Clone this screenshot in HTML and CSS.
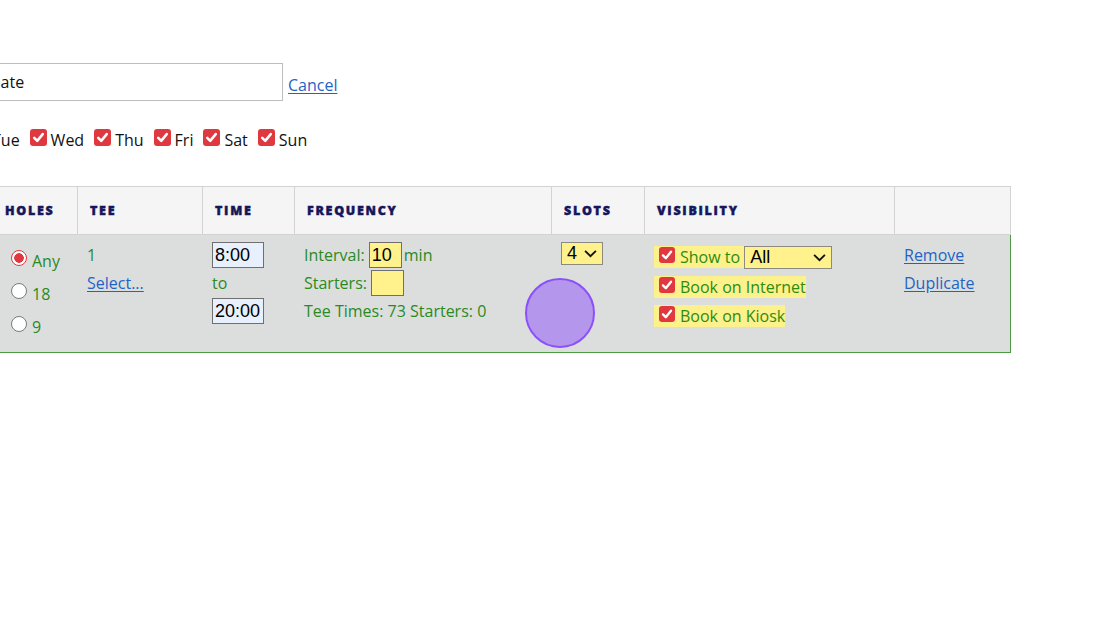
FILE: index.html
```html
<!DOCTYPE html>
<html>
<head>
<meta charset="utf-8">
<link rel="stylesheet" href="styles.css">
</head>
<body>
<div class="viewport">
  <div class="page">
    <div class="name-row">
      <input class="name-input" type="text" value="Date">
      <a class="link cancel" href="#">Cancel</a>
    </div>

    <div class="days-row">
      <label class="day"><span class="cb"><svg viewBox="0 0 16 16"><path d="M4 8.4l2.8 2.8L12 4.8"/></svg></span>Tue</label>
      <label class="day"><span class="cb"><svg viewBox="0 0 16 16"><path d="M4 8.4l2.8 2.8L12 4.8"/></svg></span>Wed</label>
      <label class="day"><span class="cb"><svg viewBox="0 0 16 16"><path d="M4 8.4l2.8 2.8L12 4.8"/></svg></span>Thu</label>
      <label class="day"><span class="cb"><svg viewBox="0 0 16 16"><path d="M4 8.4l2.8 2.8L12 4.8"/></svg></span>Fri</label>
      <label class="day"><span class="cb"><svg viewBox="0 0 16 16"><path d="M4 8.4l2.8 2.8L12 4.8"/></svg></span>Sat</label>
      <label class="day"><span class="cb"><svg viewBox="0 0 16 16"><path d="M4 8.4l2.8 2.8L12 4.8"/></svg></span>Sun</label>
    </div>

    <table class="grid">
      <colgroup>
        <col class="c-holes"><col class="c-tee"><col class="c-time"><col class="c-freq"><col class="c-slots"><col class="c-vis"><col class="c-act">
      </colgroup>
      <thead>
        <tr>
          <th>HOLES</th>
          <th>TEE</th>
          <th>TIME</th>
          <th>FREQUENCY</th>
          <th>SLOTS</th>
          <th>VISIBILITY</th>
          <th></th>
        </tr>
      </thead>
      <tbody>
        <tr>
          <td class="holes">
            <label class="opt"><span class="radio on"></span>Any</label>
            <label class="opt"><span class="radio"></span>18</label>
            <label class="opt"><span class="radio"></span>9</label>
          </td>
          <td>
            <div class="line">1</div>
            <div class="line"><a class="link" href="#">Select...</a></div>
          </td>
          <td>
            <div class="line"><span class="box time">8:00</span></div>
            <div class="line">to</div>
            <div class="line"><span class="box time">20:00</span></div>
          </td>
          <td>
            <div class="line">Interval:&nbsp;<span class="box yellow num">10</span>min</div>
            <div class="line">Starters:&nbsp;<span class="box yellow num empty"></span></div>
            <div class="line">Tee Times: 73 Starters: 0</div>
          </td>
          <td>
            <div class="line"><span class="sel slots">4<svg class="chev" viewBox="0 0 12 8"><path d="M1 1.5l5 5 5-5"/></svg></span></div>
          </td>
          <td class="vis">
            <div class="vline"><span class="hl"><span class="cb"><svg viewBox="0 0 16 16"><path d="M4 8.4l2.8 2.8L12 4.8"/></svg></span>Show to&nbsp;<span class="sel who">All<svg class="chev" viewBox="0 0 12 8"><path d="M1 1.5l5 5 5-5"/></svg></span></span></div>
            <div class="vline"><span class="hl"><span class="cb"><svg viewBox="0 0 16 16"><path d="M4 8.4l2.8 2.8L12 4.8"/></svg></span>Book on Internet</span></div>
            <div class="vline"><span class="hl"><span class="cb"><svg viewBox="0 0 16 16"><path d="M4 8.4l2.8 2.8L12 4.8"/></svg></span>Book on Kiosk</span></div>
          </td>
          <td class="act">
            <div class="line"><a class="link" href="#">Remove</a></div>
            <div class="line"><a class="link" href="#">Duplicate</a></div>
          </td>
        </tr>
      </tbody>
    </table>
  </div>
  <div class="touch"></div>
</div>
</body>
</html>
```

FILE: styles.css
```css
html, body {
  margin: 0;
  padding: 0;
  background: #ffffff;
}
body {
  font-family: "Open Sans", "Noto Sans", sans-serif;
  font-size: 16px;
  color: #111;
}
.viewport {
  position: relative;
  width: 1120px;
  height: 625px;
  overflow: hidden;
}
.page {
  margin-left: -8px;
  padding-top: 63px;
}
.name-row {
  display: flex;
  align-items: center;
  gap: 5px;
  height: 38px;
}
.name-input {
  box-sizing: border-box;
  margin-left: -12px;
  width: 303px;
  height: 38px;
  border: 1px solid #bdbdbd;
  padding: 0 8px;
  font-family: "Open Sans", "Noto Sans", sans-serif;
  font-size: 16px;
  color: #111;
  background: #fff;
  outline: none;
}
.cancel {
  padding-top: 5px;
}
.link {
  color: #1f63c6;
  text-decoration: underline;
  text-underline-offset: 2px;
}
.days-row {
  display: flex;
  align-items: center;
  gap: 10px;
  margin-top: 28px;
  margin-left: -21px;
  height: 22px;
}
.day {
  display: flex;
  align-items: center;
  gap: 4px;
  color: #111;
}
.cb {
  display: inline-block;
  width: 17px;
  height: 17px;
  border-radius: 3px;
  background: #e0383f;
  margin-bottom: 5px;
  flex: none;
}
.cb svg {
  display: block;
  width: 17px;
  height: 17px;
}
.cb path {
  fill: none;
  stroke: #fff;
  stroke-width: 2.4;
  stroke-linecap: round;
  stroke-linejoin: round;
}

.grid {
  margin-top: 35px;
  border-collapse: separate;
  border-spacing: 0;
  table-layout: fixed;
  width: 1019px;
}
.c-holes { width: 86px; }
.c-tee { width: 125px; }
.c-time { width: 92px; }
.c-freq { width: 257px; }
.c-slots { width: 93px; }
.c-vis { width: 250px; }
.c-act { width: 116px; }

.grid th {
  box-sizing: border-box;
  height: 49px;
  padding: 0 12px;
  background: #f5f5f5;
  border-top: 1px solid #d3d3d3;
  border-right: 1px solid #d3d3d3;
  border-bottom: 1px solid #d3d3d3;
  text-align: left;
  vertical-align: middle;
  font-size: 12.5px;
  font-weight: 800;
  letter-spacing: 1.7px;
  color: #16165c;
  -webkit-text-stroke: 0.45px #16165c;
}
.grid th:first-child {
  border-left: 1px solid #d3d3d3;
}
.grid tbody td {
  box-sizing: border-box;
  background: #dcdedd;
  vertical-align: top;
  padding: 6px 9px 6px;
  height: 118px;
  color: #2a8a1f;
  border-bottom: 1px solid #4f9a45;
}
.grid tbody td:first-child {
  border-left: 1px solid #4f9a45;
}
.grid tbody td:last-child {
  border-right: 1px solid #4f9a45;
}
.line {
  display: flex;
  align-items: center;
  height: 28px;
  white-space: nowrap;
}
.grid tbody td.holes {
  padding-top: 9px;
  padding-bottom: 2px;
  padding-left: 9px;
}
.opt {
  display: flex;
  align-items: center;
  height: 33px;
  padding-left: 9px;
}
.radio {
  box-sizing: border-box;
  width: 16px;
  height: 16px;
  border-radius: 50%;
  border: 1px solid #7a7a7a;
  background: #fff;
  margin: 0 5px 5px 0;
  flex: none;
}
.radio.on {
  border: 1.5px solid #e0383f;
  background: radial-gradient(circle, #e0383f 0 4.5px, #fff 5px);
}
.box {
  box-sizing: border-box;
  display: inline-flex;
  align-items: center;
  height: 26px;
  border: 1px solid #6f6f6f;
  font-family: "Liberation Sans", Arial, sans-serif;
  font-size: 18px;
  color: #000;
  padding: 0 2px;
}
.time {
  width: 52px;
  background: #e8f0fe;
}
.yellow {
  background: #fff28d;
}
.num {
  width: 33px;
  margin-right: 2px;
}
.sel {
  box-sizing: border-box;
  display: inline-flex;
  align-items: center;
  justify-content: space-between;
  height: 23px;
  border: 1px solid #8a8a80;
  background: #fff28d;
  font-family: "Liberation Sans", Arial, sans-serif;
  font-size: 18px;
  color: #000;
  padding: 0 4px 0 5px;
}
.slots {
  width: 42px;
  margin-top: -4px;
}
.who {
  width: 88px;
}
.chev {
  width: 13px;
  height: 9px;
  margin-right: 1px;
}
.chev path {
  fill: none;
  stroke: #111;
  stroke-width: 1.7;
}
.grid tbody td.vis {
  padding-top: 11px;
  padding-bottom: 2px;
}
.vline {
  height: 29.5px;
  display: flex;
  align-items: flex-start;
}
.hl {
  display: inline-flex;
  align-items: center;
  height: 22px;
  background: #fdf18c;
  padding-left: 5px;
  white-space: nowrap;
  color: #2d8c10;
}
.hl .cb {
  width: 16px;
  height: 16px;
  margin-right: 5px;
  margin-bottom: 4px;
}
.hl .cb svg {
  width: 16px;
  height: 16px;
}
.touch {
  position: absolute;
  left: 525px;
  top: 278px;
  width: 66px;
  height: 66px;
  border-radius: 50%;
  background: #b497ec;
  border: 2.5px solid #8b50fb;
}
```
